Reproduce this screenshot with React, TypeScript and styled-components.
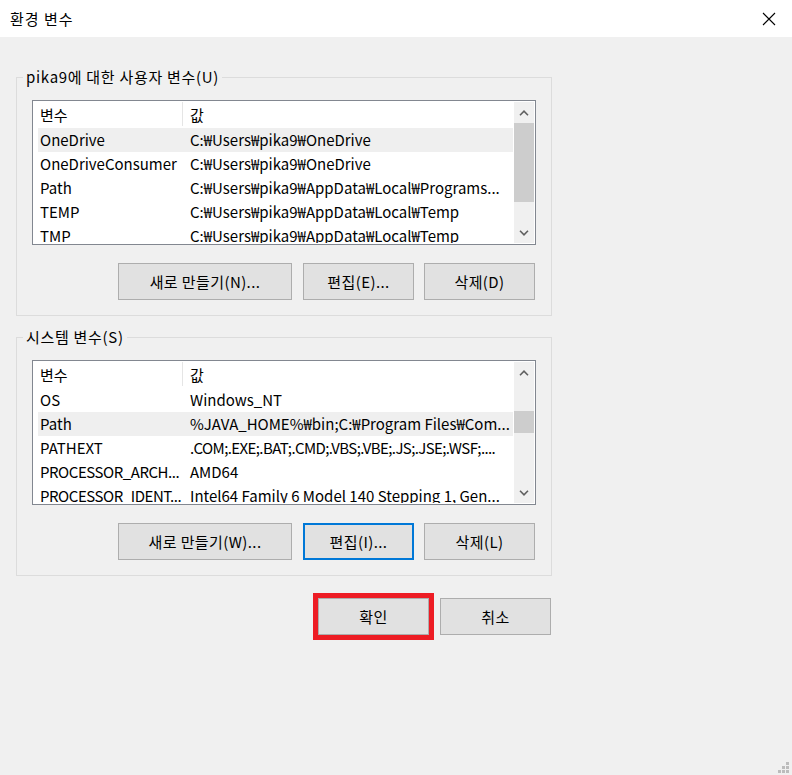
import styled, { createGlobalStyle } from "styled-components";

const GlobalStyle = createGlobalStyle`
  html, body {
    margin: 0;
    padding: 0;
    background: #f0f0f0;
  }
  * {
    box-sizing: border-box;
  }
  body {
    font-family: "Noto Sans CJK KR", "Noto Sans", sans-serif;
    font-size: 15px;
    color: #000000;
  }
`;

type Row = { name: string; value: string; selected?: boolean; tightName?: boolean; tightValue?: boolean };

const userVars: Row[] = [
  { name: "OneDrive", value: "C:₩Users₩pika9₩OneDrive", selected: true },
  { name: "OneDriveConsumer", value: "C:₩Users₩pika9₩OneDrive" },
  { name: "Path", value: "C:₩Users₩pika9₩AppData₩Local₩Programs..." },
  { name: "TEMP", value: "C:₩Users₩pika9₩AppData₩Local₩Temp" },
  { name: "TMP", value: "C:₩Users₩pika9₩AppData₩Local₩Temp" },
];

const systemVars: Row[] = [
  { name: "OS", value: "Windows_NT" },
  { name: "Path", value: "%JAVA_HOME%₩bin;C:₩Program Files₩Com...", selected: true },
  { name: "PATHEXT", value: ".COM;.EXE;.BAT;.CMD;.VBS;.VBE;.JS;.JSE;.WSF;....", tightValue: true },
  { name: "PROCESSOR_ARCH...", value: "AMD64", tightName: true },
  {
    name: "PROCESSOR_IDENT...",
    value: "Intel64 Family 6 Model 140 Stepping 1, Gen...",
    tightName: true,
  },
];

function ScrollBar({ thumbTop, thumbHeight }: { thumbTop: number; thumbHeight: number }) {
  return (
    <ScrollTrack>
      <ArrowButton>
        <svg width="10" height="6" viewBox="0 0 10 6">
          <path d="M1 5.2 L5 1.2 L9 5.2" fill="none" stroke="#606060" strokeWidth="1.6" />
        </svg>
      </ArrowButton>
      <ThumbArea>
        <Thumb style={{ top: thumbTop, height: thumbHeight }} />
      </ThumbArea>
      <ArrowButton>
        <svg width="10" height="6" viewBox="0 0 10 6">
          <path d="M1 0.8 L5 4.8 L9 0.8" fill="none" stroke="#606060" strokeWidth="1.6" />
        </svg>
      </ArrowButton>
    </ScrollTrack>
  );
}

function VarList({ rows, thumbTop, thumbHeight }: { rows: Row[]; thumbTop: number; thumbHeight: number }) {
  return (
    <ListBox>
      <ListBody>
        <HeaderRow>
          <HeaderCell $divider>변수</HeaderCell>
          <HeaderCell>값</HeaderCell>
        </HeaderRow>
        {rows.map((r) => (
          <ListRow key={r.name + r.value} $selected={r.selected}>
            <NameCell $tight={r.tightName}>{r.name}</NameCell>
            <ValueCell $tight={r.tightValue}>{r.value}</ValueCell>
          </ListRow>
        ))}
      </ListBody>
      <ScrollBar thumbTop={thumbTop} thumbHeight={thumbHeight} />
    </ListBox>
  );
}

export default function App() {
  return (
    <Window>
      <GlobalStyle />
      <TitleBar>
        <Title>환경 변수</Title>
        <CloseButton aria-label="닫기">
          <svg width="14" height="14" viewBox="0 0 14 14">
            <path d="M1 1 L13 13 M13 1 L1 13" stroke="#000" strokeWidth="1.1" fill="none" />
          </svg>
        </CloseButton>
      </TitleBar>
      <Content>
        <Group>
          <Legend>pika9에 대한 사용자 변수(U)</Legend>
          <VarList rows={userVars} thumbTop={0} thumbHeight={79} />
          <ButtonRow>
            <Button $width={174}>새로 만들기(N)...</Button>
            <Button>편집(E)...</Button>
            <Button>삭제(D)</Button>
          </ButtonRow>
        </Group>
        <Group>
          <Legend>시스템 변수(S)</Legend>
          <VarList rows={systemVars} thumbTop={28} thumbHeight={22} />
          <ButtonRow>
            <Button $width={174}>새로 만들기(W)...</Button>
            <Button $focused>편집(I)...</Button>
            <Button>삭제(L)</Button>
          </ButtonRow>
        </Group>
        <FooterRow>
          <Button $highlight>확인</Button>
          <Button>취소</Button>
        </FooterRow>
      </Content>
      <Grip>
        <GripDot style={{ gridColumn: 3, gridRow: 1 }} />
        <GripDot style={{ gridColumn: 2, gridRow: 2 }} />
        <GripDot style={{ gridColumn: 3, gridRow: 2 }} />
        <GripDot style={{ gridColumn: 1, gridRow: 3 }} />
        <GripDot style={{ gridColumn: 2, gridRow: 3 }} />
        <GripDot style={{ gridColumn: 3, gridRow: 3 }} />
      </Grip>
    </Window>
  );
}

const Window = styled.div`
  position: relative;
  width: 792px;
  height: 775px;
  background: #f0f0f0;
  overflow: hidden;
`;

const TitleBar = styled.div`
  height: 37px;
  background: #ffffff;
  display: flex;
  align-items: center;
  justify-content: space-between;
  padding-left: 10px;
`;

const Title = styled.span`
  font-size: 15px;
  line-height: 20px;
  letter-spacing: 1px;
`;

const CloseButton = styled.div`
  width: 46px;
  height: 37px;
  display: flex;
  align-items: center;
  justify-content: center;
`;

const Content = styled.div`
  display: flex;
  flex-direction: column;
  padding: 40px 0 0 16px;
`;

const Group = styled.div`
  position: relative;
  width: 536px;
  height: 239px;
  border: 1px solid #dcdcdc;
  padding: 22px 0 0 15px;
  display: flex;
  flex-direction: column;
  & + & {
    margin-top: 21px;
  }
`;

const Legend = styled.span`
  position: absolute;
  top: -11px;
  left: 6px;
  padding: 0 3px;
  background: #f0f0f0;
  font-size: 15px;
  line-height: 20px;
  letter-spacing: 0.7px;
  white-space: nowrap;
`;

const ListBox = styled.div`
  width: 504px;
  height: 145px;
  border: 1px solid #828790;
  background: #ffffff;
  display: flex;
  padding: 1px 1px 1px 0;
`;

const ListBody = styled.div`
  flex: 1;
  min-width: 0;
  overflow: hidden;
  padding-right: 1px;
`;

const HeaderRow = styled.div`
  display: grid;
  grid-template-columns: 150px 1fr;
  height: 26px;
  padding-bottom: 2px;
`;

const HeaderCell = styled.div<{ $divider?: boolean }>`
  display: flex;
  align-items: center;
  padding-left: 7px;
  border-right: ${(p) => (p.$divider ? "1px solid #e5e5e5" : "none")};
  font-size: 15px;
  white-space: nowrap;
`;

const ListRow = styled.div<{ $selected?: boolean }>`
  display: grid;
  grid-template-columns: 145px 1fr;
  height: 24px;
  margin-left: 5px;
  padding-bottom: 2px;
  background: ${(p) => (p.$selected ? "#efefef" : "#ffffff")};
  align-items: center;
`;

const NameCell = styled.div<{ $tight?: boolean }>`
  padding-left: 2px;
  white-space: nowrap;
  overflow: hidden;
  font-size: 15px;
  letter-spacing: ${(p) => (p.$tight ? "-0.45px" : "normal")};
`;

const ValueCell = styled.div<{ $tight?: boolean }>`
  padding-left: 7px;
  white-space: nowrap;
  overflow: hidden;
  font-size: 15px;
  letter-spacing: ${(p) => (p.$tight ? "-0.6px" : "normal")};
`;

const ScrollTrack = styled.div`
  width: 20px;
  background: #f0f0f0;
  display: flex;
  flex-direction: column;
`;

const ArrowButton = styled.div`
  height: 21px;
  display: flex;
  align-items: center;
  justify-content: center;
`;

const ThumbArea = styled.div`
  position: relative;
  flex: 1;
`;

const Thumb = styled.div`
  position: absolute;
  left: 0;
  right: 0;
  background: #cdcdcd;
`;

const ButtonRow = styled.div`
  display: flex;
  justify-content: flex-end;
  width: 503px;
  margin-top: 18px;
  & > :nth-child(2) {
    margin-left: 11px;
  }
  & > :nth-child(3) {
    margin-left: 10px;
  }
`;

const FooterRow = styled.div`
  display: flex;
  gap: 11px;
  width: 536px;
  justify-content: flex-end;
  margin-top: 22px;
  padding-right: 1px;
`;

const Button = styled.div<{ $width?: number; $focused?: boolean; $highlight?: boolean }>`
  width: ${(p) => p.$width ?? 111}px;
  height: 37px;
  background: #e1e1e1;
  border: ${(p) => (p.$focused ? "2px solid #0078d7" : "1px solid #adadad")};
  display: flex;
  align-items: center;
  justify-content: center;
  font-size: 15px;
  letter-spacing: 0.4px;
  white-space: nowrap;
  outline: ${(p) => (p.$highlight ? "5px solid #ed1c24" : "none")};
`;

const Grip = styled.div`
  position: absolute;
  right: 3px;
  bottom: 2px;
  display: grid;
  grid-template-columns: repeat(3, 3px);
  grid-template-rows: repeat(3, 3px);
  gap: 1px;
`;

const GripDot = styled.div`
  background: #bcbcbc;
`;
